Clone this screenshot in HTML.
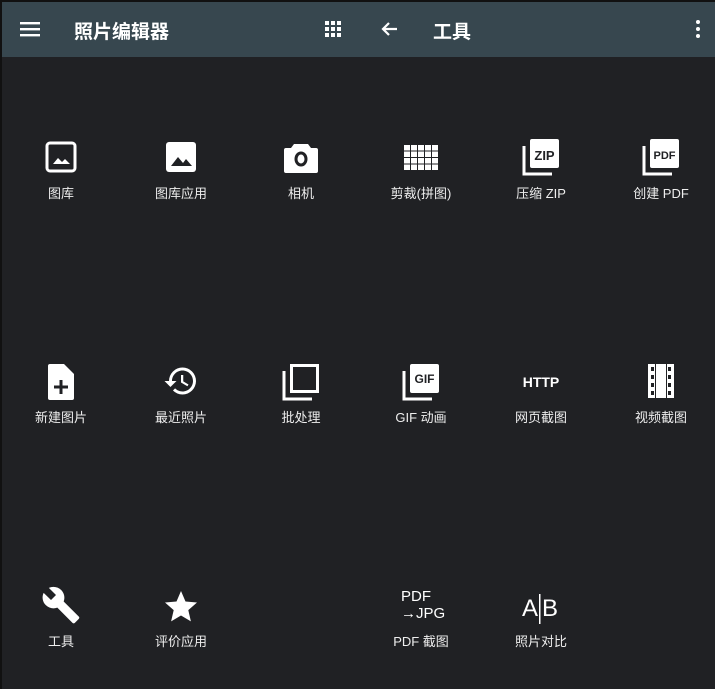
<!DOCTYPE html>
<html><head><meta charset="utf-8"><style>
*{margin:0;padding:0;box-sizing:border-box}
body{width:715px;height:689px;background:#202124;position:relative;overflow:hidden;font-family:"Liberation Sans","Noto Sans CJK SC",sans-serif;color:#fff}
.bar{position:absolute;left:0;top:0;width:715px;height:57px;background:#37474f;border-top:2px solid #111;border-left:2px solid #111}
.lb{position:absolute;left:0;top:0;width:2px;height:689px;background:#111}
.t{position:absolute;font-size:19px;font-weight:bold;top:17px}
.it{position:absolute;width:120px;text-align:center}
.it svg{display:block;margin:0 auto}
.lab{position:absolute;width:120px;text-align:center;font-size:13px;color:#eee}
</style></head><body>
<div class="bar"></div><div class="lb"></div>
<svg style="position:absolute;left:20px;top:21px" width="20" height="16"><rect y="1" width="20" height="2.4" fill="#fff"/><rect y="7" width="20" height="2.4" fill="#fff"/><rect y="13" width="20" height="2.4" fill="#fff"/></svg>
<div class="t" style="left:74px">照片编辑器</div>
<svg style="position:absolute;left:325px;top:21px" width="16" height="16" fill="#fff"><rect x="0" y="0" width="4" height="4"/><rect x="6" y="0" width="4" height="4"/><rect x="12" y="0" width="4" height="4"/><rect x="0" y="6" width="4" height="4"/><rect x="6" y="6" width="4" height="4"/><rect x="12" y="6" width="4" height="4"/><rect x="0" y="12" width="4" height="4"/><rect x="6" y="12" width="4" height="4"/><rect x="12" y="12" width="4" height="4"/></svg>
<svg style="position:absolute;left:380px;top:20px" width="18" height="18"><path d="M17 9H3M9 3L3 9l6 6" stroke="#fff" stroke-width="2.2" fill="none"/></svg>
<div class="t" style="left:433px">工具</div>
<svg style="position:absolute;left:695px;top:19px" width="6" height="20" fill="#fff"><circle cx="3" cy="3" r="2"/><circle cx="3" cy="10" r="2"/><circle cx="3" cy="17" r="2"/></svg>

<!-- row1 -->
<div class="it" style="left:1px;top:141px"><svg width="32" height="32"><rect x="2" y="2" width="28" height="28" rx="3" fill="none" stroke="#fff" stroke-width="3"/><path d="M8 23l5-6 4 4 3-3 5 5z" fill="#fff"/></svg></div>
<div class="it" style="left:121px;top:141px"><svg width="32" height="32"><rect x="1" y="1" width="30" height="30" rx="3" fill="#fff"/><path d="M6 25l7-9 5 6 3-4 6 7z" fill="#202124"/></svg></div>
<div class="it" style="left:241px;top:141px"><svg width="34" height="32"><path d="M10 3h14l3 4h5a2 2 0 0 1 2 2v21a2 2 0 0 1-2 2H2a2 2 0 0 1-2-2V9a2 2 0 0 1 2-2h5z" fill="#fff"/><ellipse cx="17" cy="18" rx="5" ry="6" fill="none" stroke="#202124" stroke-width="3"/></svg></div>
<div class="it" style="left:361px;top:145px"><svg width="34" height="25" fill="#fff">
<rect x="0" y="0" width="6" height="5.5"/><rect x="7" y="0" width="6" height="5.5"/><rect x="14" y="0" width="6" height="5.5"/><rect x="21" y="0" width="6" height="5.5"/><rect x="28" y="0" width="6" height="5.5"/>
<rect x="0" y="6.5" width="6" height="5.5"/><rect x="7" y="6.5" width="6" height="5.5"/><rect x="14" y="6.5" width="6" height="5.5"/><rect x="21" y="6.5" width="6" height="5.5"/><rect x="28" y="6.5" width="6" height="5.5"/>
<rect x="0" y="13" width="6" height="5.5"/><rect x="7" y="13" width="6" height="5.5"/><rect x="14" y="13" width="6" height="5.5"/><rect x="21" y="13" width="6" height="5.5"/><rect x="28" y="13" width="6" height="5.5"/>
<rect x="0" y="19.5" width="6" height="5.5"/><rect x="7" y="19.5" width="6" height="5.5"/><rect x="14" y="19.5" width="6" height="5.5"/><rect x="21" y="19.5" width="6" height="5.5"/><rect x="28" y="19.5" width="6" height="5.5"/>
</svg></div>
<div class="it" style="left:481px;top:137px"><svg width="40" height="40"><path d="M3 9v28h28" stroke="#fff" stroke-width="3" fill="none"/><rect x="9" y="2" width="29" height="29" rx="2" fill="#fff"/><text x="23.5" y="23" font-size="13" font-weight="bold" fill="#202124" text-anchor="middle" font-family="Liberation Sans">ZIP</text></svg></div>
<div class="it" style="left:601px;top:137px"><svg width="40" height="40"><path d="M3 9v28h28" stroke="#fff" stroke-width="3" fill="none"/><rect x="9" y="2" width="29" height="29" rx="2" fill="#fff"/><text x="23.5" y="22" font-size="11" font-weight="bold" fill="#202124" text-anchor="middle" font-family="Liberation Sans">PDF</text></svg></div>
<div class="lab" style="left:1px;top:183px">图库</div>
<div class="lab" style="left:121px;top:183px">图库应用</div>
<div class="lab" style="left:241px;top:183px">相机</div>
<div class="lab" style="left:361px;top:183px">剪裁(拼图)</div>
<div class="lab" style="left:481px;top:183px">压缩 ZIP</div>
<div class="lab" style="left:601px;top:183px">创建 PDF</div>

<!-- row2 -->
<div class="it" style="left:1px;top:364px"><svg width="28" height="36"><path d="M3 0h14l10 10v24a2 2 0 0 1-2 2H3a2 2 0 0 1-2-2V2a2 2 0 0 1 2-2z" fill="#fff"/><path d="M14 16v14M7 23h14" stroke="#202124" stroke-width="3"/></svg></div>
<div class="it" style="left:121px;top:363px"><svg width="36" height="36" viewBox="0 0 24 24"><path fill="#fff" d="M13 3a9 9 0 0 0-9 9H1l3.89 3.89.07.14L9 12H6c0-3.870 3.13-7 7-7s7 3.13 7 7-3.13 7-7 7c-1.93 0-3.680-.79-4.94-2.06l-1.42 1.42A8.954 8.954 0 0 0 13 21a9 9 0 0 0 0-18zm-1 5v5l4.28 2.54.72-1.21-3.5-2.08V8H12z"/></svg></div>
<div class="it" style="left:241px;top:362px"><svg width="40" height="40"><path d="M3 9v28h28" stroke="#fff" stroke-width="3" fill="none"/><rect x="10.5" y="3.5" width="26" height="26" fill="none" stroke="#fff" stroke-width="3"/></svg></div>
<div class="it" style="left:361px;top:362px"><svg width="40" height="40"><path d="M3 9v28h28" stroke="#fff" stroke-width="3" fill="none"/><rect x="9" y="2" width="29" height="29" rx="2" fill="#fff"/><text x="23.5" y="21" font-size="12" font-weight="bold" fill="#202124" text-anchor="middle" font-family="Liberation Sans">GIF</text></svg></div>
<div class="it" style="left:481px;top:372px"><svg width="44" height="18"><text x="22" y="15" font-size="14" font-weight="bold" fill="#fff" text-anchor="middle" font-family="Liberation Sans">HTTP</text></svg></div>
<div class="it" style="left:601px;top:364px"><svg width="28" height="34"><rect x="1" y="0" width="26" height="34" fill="#fff"/><g fill="#202124"><rect x="4" y="3" width="3" height="4"/><rect x="4" y="11" width="3" height="4"/><rect x="4" y="19" width="3" height="4"/><rect x="4" y="27" width="3" height="4"/><rect x="21" y="3" width="3" height="4"/><rect x="21" y="11" width="3" height="4"/><rect x="21" y="19" width="3" height="4"/><rect x="21" y="27" width="3" height="4"/><rect x="8" y="0" width="1" height="34"/><rect x="19" y="0" width="1" height="34"/></g></svg></div>
<div class="lab" style="left:1px;top:407px">新建图片</div>
<div class="lab" style="left:121px;top:407px">最近照片</div>
<div class="lab" style="left:241px;top:407px">批处理</div>
<div class="lab" style="left:361px;top:407px">GIF 动画</div>
<div class="lab" style="left:481px;top:407px">网页截图</div>
<div class="lab" style="left:601px;top:407px">视频截图</div>

<!-- row3 -->
<div class="it" style="left:1px;top:585px"><svg width="40" height="40" viewBox="0 0 24 24"><path fill="#fff" d="M22.7 19l-9.1-9.1c.9-2.3.4-5-1.5-6.9-2-2-5-2.4-7.4-1.3L9 6 6 9 1.6 4.7C.4 7.1.9 10.1 2.9 12.1c1.9 1.9 4.6 2.4 6.9 1.5l9.1 9.1c.4.4 1 .4 1.4 0l2.3-2.3c.5-.4.5-1.1.1-1.4z"/></svg></div>
<div class="it" style="left:121px;top:590px"><svg width="34" height="34"><path d="M17 1l4.5 10.5 11.5 1-8.7 7.6 2.6 11.3L17 25.5 7.1 31.4l2.6-11.3L1 12.5l11.5-1z" fill="#fff"/></svg></div>
<div class="it" style="left:361px;top:588px;font-size:15px;line-height:17px;text-align:left;padding-left:40px">PDF<br>→JPG</div>
<div class="it" style="left:481px;top:590px"><svg width="40" height="36"><text x="1" y="26" font-size="24" fill="#fff" font-family="Liberation Sans">A</text><rect x="18" y="4" width="1.5" height="30" fill="#fff"/><text x="21" y="26" font-size="24" fill="#fff" font-family="Liberation Sans">B</text></svg></div>
<div class="lab" style="left:1px;top:631px">工具</div>
<div class="lab" style="left:121px;top:631px">评价应用</div>
<div class="lab" style="left:361px;top:631px">PDF 截图</div>
<div class="lab" style="left:481px;top:631px">照片对比</div>
</body></html>
